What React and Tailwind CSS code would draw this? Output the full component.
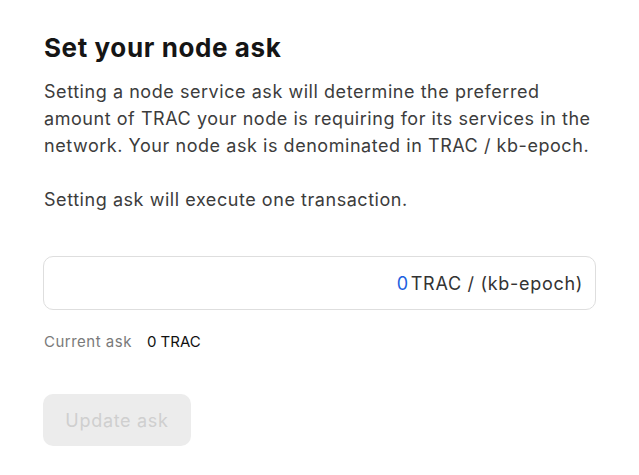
export default function App() {
  return (
    <div className="w-[639px] h-[475px] bg-white px-[44px] pt-[30px]" style={{ fontFamily: "Inter, 'Noto Sans', sans-serif" }}>
      <h1 className="text-[26px] leading-[36px] font-bold text-[#151515] tracking-[0.6px]">Set your node ask</h1>
      <p className="mt-[12px] text-[18px] leading-[27px] text-[#3c3c3c] tracking-[0.55px] whitespace-nowrap">
        Setting a node service ask will determine the preferred<br />
        amount of TRAC your node is requiring for its services in the<br />
        network. Your node ask is denominated in TRAC / kb-epoch.
      </p>
      <p className="mt-[27px] text-[18px] leading-[27px] text-[#3c3c3c] tracking-[0.55px]">Setting ask will execute one transaction.</p>
      <div className="mt-[43px] -ml-px w-[553px] h-[54px] border border-[#dedede] rounded-[10px] flex items-center justify-end pr-[12px] text-[18px] text-[#333] tracking-[0.7px]">
        <span className="text-[#1d5fe0]">0</span>
        <span className="ml-[2px]">TRAC / (kb-epoch)</span>
      </div>
      <div className="mt-[21px] flex items-center text-[15px] leading-[22px]">
        <span className="text-[#7a7a7a] tracking-[0.5px]">Current ask</span>
        <span className="ml-[15px] text-[#111]">0 TRAC</span>
      </div>
      <button className="mt-[41px] -ml-px w-[148px] h-[52px] rounded-[10px] bg-[#ececec] text-[#cfcfcf] text-[18px] tracking-[0.7px]">Update ask</button>
    </div>
  );
}
